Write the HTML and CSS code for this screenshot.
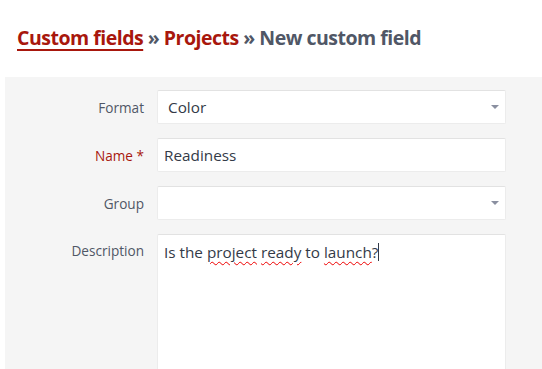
FILE: index.html
```html
<!DOCTYPE html>
<html lang="en">
<head>
  <meta charset="UTF-8" />
  <title>New custom field</title>
  <link rel="stylesheet" href="styles.css">
</head>
<body>

<h2 class="title"><a href="#" class="crumb first">Custom fields</a> &raquo; <a href="#" class="crumb">Projects</a> &raquo; New custom field</h2>

<div class="box">
  <div class="row">
    <label class="lbl">Format</label>
    <div class="field select"><span class="val pad">Color</span><span class="arrow"></span></div>
  </div>
  <div class="row">
    <label class="lbl req">Name *</label>
    <div class="field"><span class="val">Readiness</span></div>
  </div>
  <div class="row">
    <label class="lbl">Group</label>
    <div class="field select"><span class="val"></span><span class="arrow"></span></div>
  </div>
  <div class="row">
    <label class="lbl top">Description</label>
    <div class="field area"><span class="val">Is the <span class="typo">project</span> <span class="typo">ready</span> to <span class="typo">launch</span>?<span class="caret"></span></span></div>
  </div>
</div>

</body>
</html>
```

FILE: styles.css
```css
body {
  margin: 0;
  font-family: "Open Sans", "DejaVu Sans", sans-serif;
  background: #fff;
  color: #333a47;
}
.title {
  margin: 0;
  padding: 24px 17px 0;
  height: 53px;
  font-size: 19.5px;
  letter-spacing: -0.5px;
  font-weight: bold;
  color: #505766;
  white-space: nowrap;
}
.crumb {
  color: #a8170d;
  text-decoration: none;
}
.crumb.first {
  text-decoration: underline;
  text-decoration-thickness: 2px;
  text-underline-offset: 4px;
}
.box {
  margin-left: 5px;
  background: #f5f5f5;
  padding-top: 13px;
  height: 279px;
  overflow: hidden;
}
.row {
  display: flex;
  align-items: center;
  margin-bottom: 14px;
}
.lbl {
  width: 139px;
  text-align: right;
  font-size: 13.6px;
  color: #505766;
  margin-right: 13px;
}
.lbl.req {
  color: #a8170d;
}
.lbl.top {
  align-self: flex-start;
  padding-top: 7px;
}
.field {
  position: relative;
  width: 349px;
  height: 34px;
  box-sizing: border-box;
  background: #fff;
  border: 1px solid #ececec;
  border-top-color: #e2e2e2;
  border-radius: 2px;
  display: flex;
  align-items: center;
  padding: 0 6px;
  font-size: 15.3px;
}
.val.pad {
  padding-left: 4px;
}
.arrow {
  position: absolute;
  right: 6px;
  top: 14px;
  border-left: 4px solid transparent;
  border-right: 4px solid transparent;
  border-top: 4px solid #8a8fa0;
}
.field.area {
  height: 200px;
  align-items: flex-start;
  padding-top: 7px;
}
.typo {
  text-decoration: underline wavy #e00;
  text-decoration-thickness: 1px;
  text-underline-offset: 3px;
}
.caret {
  display: inline-block;
  width: 1px;
  height: 18px;
  background: #333a47;
  vertical-align: -3px;
}
```
